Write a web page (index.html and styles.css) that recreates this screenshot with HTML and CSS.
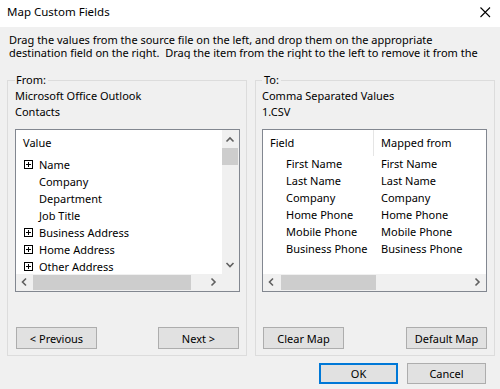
FILE: index.html
```html
<!DOCTYPE html>
<html>
<head>
<meta charset="utf-8">
<link rel="stylesheet" href="styles.css">
</head>
<body>
<div class="titlebar">
  <span class="title">Map Custom Fields</span>
  <svg class="close" width="11" height="11" viewBox="0 0 11 11"><path d="M0.5 0.5L10 10M10 0.5L0.5 10" stroke="#000" stroke-width="1.1" fill="none"/></svg>
</div>
<div class="content">
  <div class="instructions">
    <div class="instr-line">Drag the values from the source file on the left, and drop them on the appropriate</div>
    <div class="instr-line">destination field on the right.&nbsp; Drag the item from the right to the left to remove it from the</div>
  </div>
  <div class="groups">
    <fieldset class="group group-left">
      <legend>From:</legend>
      <div class="source-line">Microsoft Office Outlook</div>
      <div class="source-line">Contacts</div>
      <div class="listbox listbox-left">
        <div class="list-content">
          <div class="list-header">Value</div>
          <div class="row"><svg class="expander" viewBox="0 0 9 9"><rect x="0.5" y="0.5" width="8" height="8" fill="#fff" stroke="#000"/><path d="M2 4.5H7M4.5 2V7" stroke="#000"/></svg>Name</div>
          <div class="row"><span class="spacer"></span>Company</div>
          <div class="row"><span class="spacer"></span>Department</div>
          <div class="row"><span class="spacer"></span>Job Title</div>
          <div class="row"><svg class="expander" viewBox="0 0 9 9"><rect x="0.5" y="0.5" width="8" height="8" fill="#fff" stroke="#000"/><path d="M2 4.5H7M4.5 2V7" stroke="#000"/></svg>Business Address</div>
          <div class="row"><svg class="expander" viewBox="0 0 9 9"><rect x="0.5" y="0.5" width="8" height="8" fill="#fff" stroke="#000"/><path d="M2 4.5H7M4.5 2V7" stroke="#000"/></svg>Home Address</div>
          <div class="row"><svg class="expander" viewBox="0 0 9 9"><rect x="0.5" y="0.5" width="8" height="8" fill="#fff" stroke="#000"/><path d="M2 4.5H7M4.5 2V7" stroke="#000"/></svg>Other Address</div>
        </div>
        <div class="vscroll">
          <svg class="sb-arrow" viewBox="0 0 17 17"><path d="M4.5 11.5L8 8L11.5 11.5" stroke="#606060" stroke-width="1.6" fill="none"/></svg>
          <div class="vthumb"></div>
          <div class="track"></div>
          <svg class="sb-arrow" viewBox="0 0 17 17"><path d="M4.5 6L8 9.5L11.5 6" stroke="#606060" stroke-width="1.6" fill="none"/></svg>
        </div>
        <div class="hscroll">
          <svg class="sb-arrow" viewBox="0 0 17 17"><path d="M10 4.5L6.5 8L10 11.5" stroke="#606060" stroke-width="1.6" fill="none"/></svg>
          <div class="hthumb hthumb-left"></div>
          <div class="track"></div>
          <svg class="sb-arrow" viewBox="0 0 17 17"><path d="M6.5 4.5L10 8L6.5 11.5" stroke="#606060" stroke-width="1.6" fill="none"/></svg>
        </div>
        <div class="corner"></div>
      </div>
      <div class="btn-row btn-row-left">
        <button class="btn">&lt; Previous</button>
        <button class="btn">Next &gt;</button>
      </div>
    </fieldset>
    <fieldset class="group group-right">
      <legend>To:</legend>
      <div class="source-line">Comma Separated Values</div>
      <div class="source-line">1.CSV</div>
      <div class="listbox listbox-right">
        <div class="list-content">
          <div class="cols-header"><span class="col1 col1-head">Field</span><span class="col2">Mapped from</span></div>
          <div class="map-row"><span class="col1">First Name</span><span class="col2">First Name</span></div>
          <div class="map-row"><span class="col1">Last Name</span><span class="col2">Last Name</span></div>
          <div class="map-row"><span class="col1">Company</span><span class="col2">Company</span></div>
          <div class="map-row"><span class="col1">Home Phone</span><span class="col2">Home Phone</span></div>
          <div class="map-row"><span class="col1">Mobile Phone</span><span class="col2">Mobile Phone</span></div>
          <div class="map-row"><span class="col1">Business Phone</span><span class="col2">Business Phone</span></div>
        </div>
        <div class="hscroll">
          <svg class="sb-arrow" viewBox="0 0 17 17"><path d="M10 4.5L6.5 8L10 11.5" stroke="#606060" stroke-width="1.6" fill="none"/></svg>
          <div class="hthumb hthumb-right"></div>
          <div class="track"></div>
          <svg class="sb-arrow" viewBox="0 0 17 17"><path d="M6.5 4.5L10 8L6.5 11.5" stroke="#606060" stroke-width="1.6" fill="none"/></svg>
        </div>
      </div>
      <div class="btn-row btn-row-right">
        <button class="btn">Clear Map</button>
        <button class="btn">Default Map</button>
      </div>
    </fieldset>
  </div>
  <div class="dialog-buttons">
    <button class="btn dlg-btn ok">OK</button>
    <button class="btn dlg-btn">Cancel</button>
  </div>
</div>
</body>
</html>
```
FILE: styles.css
```css
* { box-sizing: border-box; }
html, body { margin: 0; padding: 0; }
body {
  width: 500px;
  height: 389px;
  overflow: hidden;
  background: #f0f0f0;
  font-family: "Noto Sans", sans-serif;
  font-size: 11px;
  color: #000;
}
.titlebar {
  height: 27px;
  background: #fff;
  display: flex;
  justify-content: space-between;
  align-items: flex-start;
  padding: 4px 9px 0 7px;
}
.title { line-height: 16px; font-size: 11.5px; }
.close { margin-top: 3px; display: block; }
.content { padding: 6px 0 0 7px; }
.instructions { padding-left: 2px; overflow: hidden; }
.instr-line {
  height: 13px;
  line-height: 13px;
  white-space: nowrap;
}
.groups { display: flex; gap: 8px; margin-top: 13px; }
.group {
  width: 240px;
  margin: 0;
  min-width: 0;
  border: 1px solid #dcdcdc;
}
.group-left { padding: 0 6px 6px 7px; }
.group-right { padding: 0 7px 6px 6px; }
legend { padding: 0 2px 0 1px; line-height: 16px; }
.group-right legend { padding-left: 2px; }
.source-line { line-height: 16px; white-space: nowrap; }
.listbox {
  margin-top: 9px;
  height: 163px;
  border: 1px solid #828790;
  background: #fff;
  display: grid;
  grid-template-rows: 1fr 17px;
}
.listbox-left { grid-template-columns: 1fr 17px; }
.listbox-right { grid-template-columns: 1fr; }
.list-content { overflow: hidden; min-width: 0; }
.list-header { height: 26px; line-height: 25px; padding-left: 7px; }
.row {
  height: 17px;
  line-height: 16px;
  display: flex;
  align-items: center;
  padding-left: 8px;
  white-space: nowrap;
}
.expander, .spacer { width: 9px; height: 9px; margin-right: 6px; flex: none; display: block; }
.vscroll { background: #f0f0f0; display: flex; flex-direction: column; min-height: 0; }
.hscroll { background: #f0f0f0; display: flex; min-width: 0; }
.sb-arrow { width: 17px; height: 17px; flex: none; display: block; }
.track { flex: 1; }
.vthumb { flex: none; height: 17px; margin: 1px 1px 0 0; background: #cdcdcd; }
.hthumb { flex: none; margin: 1px 0; background: #cdcdcd; }
.hthumb-left { width: 158px; }
.hthumb-right { width: 95px; margin-left: 1px; }
.corner { background: #f0f0f0; }
.cols-header { display: flex; height: 26px; line-height: 25px; }
.map-row { display: flex; height: 17px; line-height: 16px; white-space: nowrap; }
.col1 { width: 111px; flex: none; padding-left: 23px; }
.col1-head { padding-left: 7px; border-right: 1px solid #e5e5e5; }
.col2 { padding-left: 7px; }
.btn-row { display: flex; justify-content: space-between; margin-top: 35px; }
.btn-row-left { padding: 0 1px; }
.btn-row-right { padding: 0 0 0 1px; }
.btn {
  width: 81px;
  height: 22px;
  border: 1px solid #adadad;
  background: #e1e1e1;
  font: inherit;
  color: #000;
  padding: 0;
  margin: 0;
}
.dialog-buttons {
  display: flex;
  justify-content: flex-end;
  gap: 9px;
  margin-top: 7px;
  padding-right: 14px;
}
.dlg-btn { width: 79px; height: 21px; }
.ok { border: 2px solid #0078d7; }
```
